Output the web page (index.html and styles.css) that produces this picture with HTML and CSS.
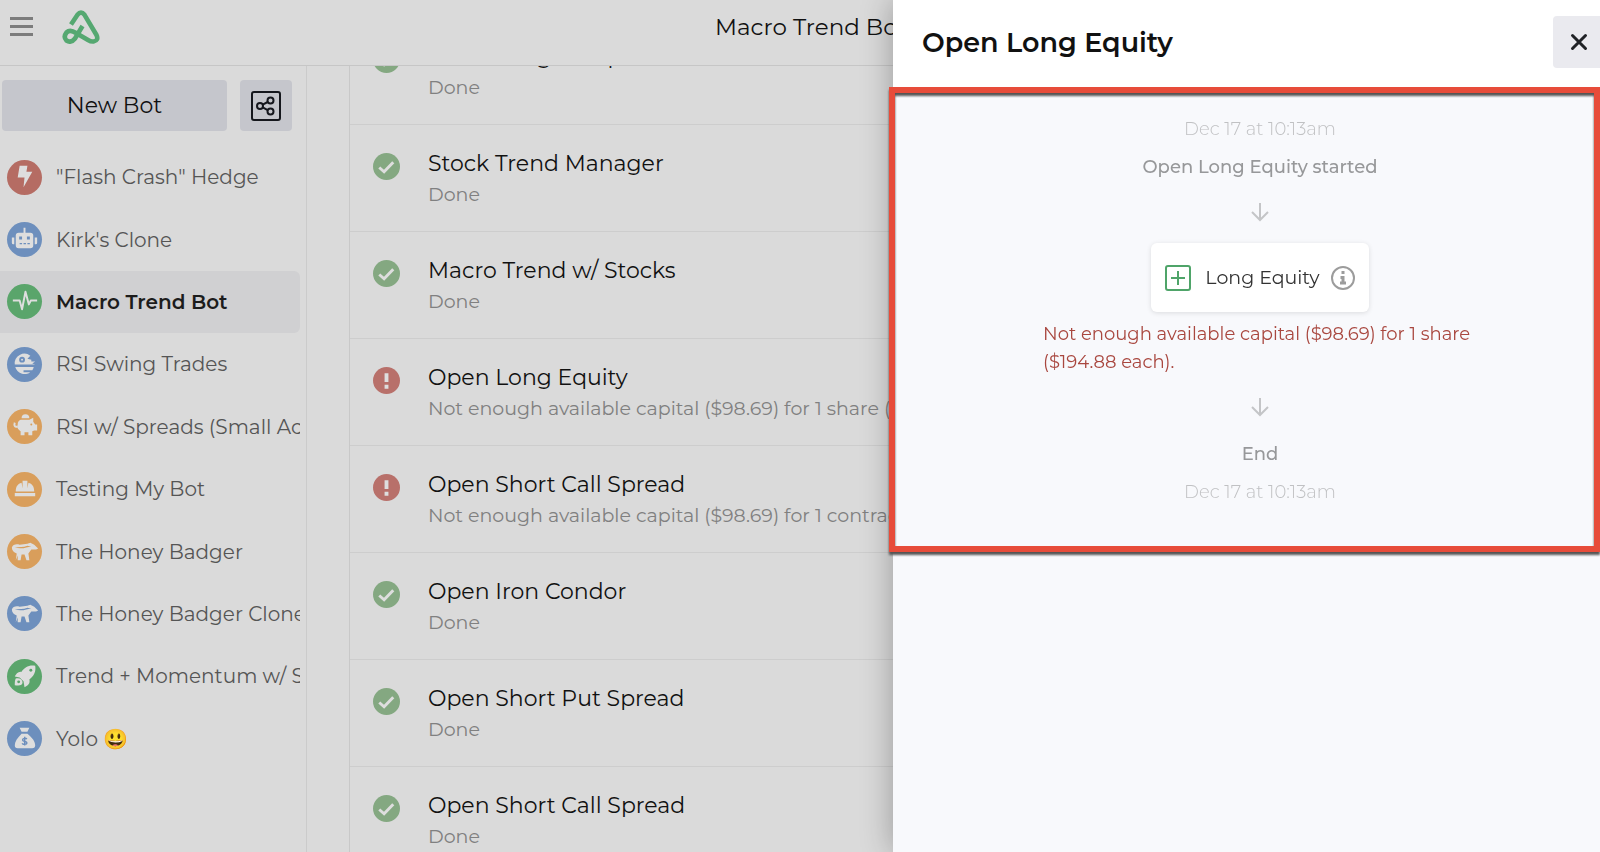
FILE: index.html
```html
<!DOCTYPE html>
<html lang="en">

<head>
    <meta charset="UTF-8">
    <title>Macro Trend Bot</title>
    <link rel="stylesheet" href="styles.css">
</head>

<body>
    <header class="topbar">
        <button class="menu" aria-label="Menu">
            <span></span>
            <span></span>
            <span></span>
        </button>
        <a href="#" class="logo" aria-label="Home">
            <svg width="38" height="34" viewBox="0 0 38 34" fill="none" stroke="#55a871" stroke-width="4.600" stroke-linejoin="round">
                <path d="M9 14.500 L15.500 4.800 Q19 .5 22.500 4.800 L34.500 25 Q37 30.500 31.500 31.500 Q29 31.800 26 30 L14 23 Q8 19 4.500 22.500 Q1 27 4.500 30.500 Q9 33.500 13 28.500 L20.500 16" />
            </svg>
        </a>
        <h1>Macro Trend Bot</h1>
    </header>

    <div class="page">
        <aside class="sidebar">
            <div class="actions">
                <button class="new-bot">New Bot</button>
                <button class="share" aria-label="Share">
                    <svg width="32" height="32" viewBox="0 0 32 32" fill="none" stroke="#15171d" stroke-width="2">
                        <rect x="2" y="2" width="28" height="28" rx="2" />
                        <circle cx="10" cy="16" r="3" />
                        <circle cx="20.500" cy="10.500" r="3" />
                        <circle cx="20.500" cy="21.500" r="3" />
                        <path d="M12.700 14.600l5-2.600M12.700 17.400l5 2.700" />
                    </svg>
                </button>
            </div>
            <nav class="bots">
                <a href="#">
                    <svg class="icon red" viewBox="0 0 36 36"><path d="M13 6h8l-1 6h6L17 28l1-10h-7z" /></svg>
                    <span>"Flash Crash" Hedge</span>
                </a>
                <a href="#">
                    <svg class="icon blue" viewBox="0 0 36 36">
                        <path d="M17 6h2v5h5a3 3 0 0 1 3 3v10a3 3 0 0 1-3 3H12a3 3 0 0 1-3-3V14a3 3 0 0 1 3-3h5zM5 16h2.500v7H6.500a1.500 1.500 0 0 1-1.500-1.500zM28.500 16H31v5.500a1.500 1.500 0 0 1-1.500 1.500h-1z" />
                        <path class="cut" d="M12.500 15h3v3h-3zM20.500 15h3v3h-3zM13 21.500h2.500v1.500H13zM17 21.500h2.500v1.500H17zM21 21.500h2.500v1.500H21z" />
                    </svg>
                    <span>Kirk's Clone</span>
                </a>
                <a href="#" class="current">
                    <svg class="icon green" viewBox="0 0 36 36"><path class="line" d="M6 17h7l2.500 9L19 8l3.500 13 2-4H31" /></svg>
                    <span>Macro Trend Bot</span>
                </a>
                <a href="#">
                    <svg class="icon blue" viewBox="0 0 36 36">
                        <path d="M8 18a10 10 0 0 1 16-9l-3 3 4 1v2h4l-3 2 3 1zM8.500 20.500h19A10 10 0 0 1 26 24h-9v2h7a10 10 0 0 1-15.500-5.500z" />
                        <circle class="cut" cx="15.500" cy="13" r="3" />
                        <circle cx="15.500" cy="13" r="1" />
                    </svg>
                    <span>RSI Swing Trades</span>
                </a>
                <a href="#">
                    <svg class="icon orange" viewBox="0 0 36 36">
                        <path d="M15 9.500a4 4 0 0 1 8 0zM14 11h9l4-2v4l2 3h2v6h-3l-2 1v4h-4v-3h-4v3h-4v-4c-3-2-4-4-3-7 0-3 1-4 3-5z" />
                        <path class="line" d="M11 18c-3 1-4-1-3-4" />
                        <circle class="cut" cx="25" cy="16" r="1" />
                    </svg>
                    <span>RSI w/ Spreads (Small Account)</span>
                </a>
                <a href="#">
                    <svg class="icon orange" viewBox="0 0 36 36">
                        <path d="M9 20c0-5 2-8 6-9l1 6V9h5v8l1-6c4 1 6 4 6 9zM8 21.500h21V25H8z" />
                    </svg>
                    <span>Testing My Bot</span>
                </a>
                <a href="#">
                    <svg class="icon orange" viewBox="0 0 36 36">
                        <path d="M5 14c1-3 4-4 8-3l8-1 3-1 4 2 4 4-2 1h-5l-3 4 1 7h-3l-2-6h-3l-1 6h-3v-5l-2 5H9l1-7c-3-1-5-3-5-6z" />
                        <path class="cut" d="M8 14c4-1 9 0 13-2l4 1c-5 0-8 3-17 1z" />
                    </svg>
                    <span>The Honey Badger</span>
                </a>
                <a href="#">
                    <svg class="icon blue" viewBox="0 0 36 36">
                        <path d="M5 14c1-3 4-4 8-3l8-1 3-1 4 2 4 4-2 1h-5l-3 4 1 7h-3l-2-6h-3l-1 6h-3v-5l-2 5H9l1-7c-3-1-5-3-5-6z" />
                        <path class="cut" d="M8 14c4-1 9 0 13-2l4 1c-5 0-8 3-17 1z" />
                    </svg>
                    <span>The Honey Badger Clone</span>
                </a>
                <a href="#">
                    <svg class="icon green" viewBox="0 0 36 36">
                        <path d="M29 7c-7-1-11 2-14 6-3 0-5 1-7 5l5 1 4 4 1 6c4-2 6-4 5-8 5-4 7-8 6-14zM9 20c4-1 7 1 7 4s-3 4-8 3c0-3 0-5 1-7z" />
                        <circle class="cut" cx="24.500" cy="11.500" r="1.500" />
                        <circle class="cut" cx="12" cy="23.500" r="1.500" />
                    </svg>
                    <span>Trend + Momentum w/ Stocks</span>
                </a>
                <a href="#">
                    <svg class="icon blue" viewBox="0 0 36 36">
                        <path d="M13 7h10l-2 4h-6zM15 13h6c5 4 8 8 8 12 0 2-1 3-3 3H11c-2 0-3-1-3-3 0-4 3-8 7-12z" />
                        <path class="cut-line" d="M20.500 18.500c-1-1-4.500-1-4.500 1s4.500 1 4.500 3-4 2-5 .5M18.200 16.200v9" />
                    </svg>
                    <span>Yolo 😃</span>
                </a>
            </nav>
        </aside>

        <main class="log">
            <ul>
                <li>
                    <svg class="status ok" viewBox="0 0 28 28"><circle cx="14" cy="14" r="14" /><path d="M6.500 15l5 4.500L21 9.500" /></svg>
                    <div>
                        <h2>Stock Long w/ Options</h2>
                        <p>Done</p>
                    </div>
                </li>
                <li>
                    <svg class="status ok" viewBox="0 0 28 28"><circle cx="14" cy="14" r="14" /><path d="M6.500 15l5 4.500L21 9.500" /></svg>
                    <div>
                        <h2>Stock Trend Manager</h2>
                        <p>Done</p>
                    </div>
                </li>
                <li>
                    <svg class="status ok" viewBox="0 0 28 28"><circle cx="14" cy="14" r="14" /><path d="M6.500 15l5 4.500L21 9.500" /></svg>
                    <div>
                        <h2>Macro Trend w/ Stocks</h2>
                        <p>Done</p>
                    </div>
                </li>
                <li>
                    <svg class="status fail" viewBox="0 0 28 28"><circle cx="14" cy="14" r="14" /><path d="M14 6.500v9M14 18.500v4" /></svg>
                    <div>
                        <h2>Open Long Equity</h2>
                        <p>Not enough available capital ($98.69) for 1 share ($194.88 each).</p>
                    </div>
                </li>
                <li>
                    <svg class="status fail" viewBox="0 0 28 28"><circle cx="14" cy="14" r="14" /><path d="M14 6.500v9M14 18.500v4" /></svg>
                    <div>
                        <h2>Open Short Call Spread</h2>
                        <p>Not enough available capital ($98.69) for 1 contract.</p>
                    </div>
                </li>
                <li>
                    <svg class="status ok" viewBox="0 0 28 28"><circle cx="14" cy="14" r="14" /><path d="M6.500 15l5 4.500L21 9.500" /></svg>
                    <div>
                        <h2>Open Iron Condor</h2>
                        <p>Done</p>
                    </div>
                </li>
                <li>
                    <svg class="status ok" viewBox="0 0 28 28"><circle cx="14" cy="14" r="14" /><path d="M6.500 15l5 4.500L21 9.500" /></svg>
                    <div>
                        <h2>Open Short Put Spread</h2>
                        <p>Done</p>
                    </div>
                </li>
                <li>
                    <svg class="status ok" viewBox="0 0 28 28"><circle cx="14" cy="14" r="14" /><path d="M6.500 15l5 4.500L21 9.500" /></svg>
                    <div>
                        <h2>Open Short Call Spread</h2>
                        <p>Done</p>
                    </div>
                </li>
            </ul>
        </main>
    </div>

    <!-- slide-in panel -->
    <section class="drawer">
        <div class="drawer-head">
            <h2>Open Long Equity</h2>
            <button class="close" aria-label="Close">
                <svg width="18" height="18" viewBox="0 0 18 18" fill="none" stroke="#202226" stroke-width="3" stroke-linecap="round"><path d="M2.500 2.500l13 13M15.500 2.500l-13 13" /></svg>
            </button>
        </div>
        <div class="flow">
            <time>Dec 17 at 10:13am</time>
            <p class="step">Open Long Equity started</p>
            <svg class="arrow" viewBox="0 0 20 20"><path d="M10 1v17M2 10l8 8 8-8" /></svg>
            <div class="card">
                <svg width="26" height="26" viewBox="0 0 26 26" fill="none" stroke="#4fa469" stroke-width="2"><rect x="1" y="1" width="24" height="24" rx="2" /><path d="M13 6v14M6 13h14" /></svg>
                <span>Long Equity</span>
                <button class="info" aria-label="Info">
                    <svg width="24" height="24" viewBox="0 0 24 24" fill="none" stroke="#9c9c9c" stroke-width="2"><circle cx="12" cy="12" r="11" /><path stroke-width="3" d="M12 5v3M9.500 11.500H12V17M9 17h6" /></svg>
                </button>
            </div>
            <p class="error">Not enough available capital ($98.69) for 1 share ($194.88 each).</p>
            <svg class="arrow" viewBox="0 0 20 20"><path d="M10 1v17M2 10l8 8 8-8" /></svg>
            <p class="step">End</p>
            <time>Dec 17 at 10:13am</time>
        </div>
    </section>
    <div class="highlight"></div>
</body>
</html>
```

FILE: styles.css
```css
* {
    padding: 0;
    margin: 0;
    box-sizing: border-box;
}

body {
    height: 100vh;
    overflow: hidden;
    display: flex;
    flex-direction: column;
    background: #dadada;
    color: #111;
    font-family: Montserrat, Inter, "Noto Color Emoji", sans-serif;
    font-size: 20px;
}

ul {
    list-style: none;
}

a {
    color: inherit;
    text-decoration: none;
}

button {
    border: 0;
    background: none;
    font: inherit;
    color: inherit;
    cursor: pointer;
}

svg {
    display: block;
    flex: none;
}

.topbar {
    display: flex;
    align-items: center;
    flex: none;
    height: 66px;
    padding: 0 10px 12px;
    border-bottom: 1px solid #c6c6c6;
    position: relative;
}

.menu span {
    display: block;
    width: 23px;
    height: 3px;
    margin: 5px 0;
    background: #7c7c7c;
}

.logo {
    margin-left: 29px;
}

.topbar h1 {
    position: absolute;
    left: 22px;
    right: 0;
    text-align: center;
    font-size: 23px;
    font-weight: 400;
}

.page {
    display: flex;
    flex: 1;
    min-height: 0;
}

.sidebar {
    flex: none;
    width: 307px;
    padding: 14px 6px 0 0;
    border-right: 1px solid #cbcbcb;
}

.actions {
    display: flex;
    gap: 13px;
    padding: 0 8px 0 2px;
}

.actions button {
    height: 51px;
    border-radius: 4px;
    background: #c5c6cc;
}

.new-bot {
    flex: 1;
    font-size: 22px;
}

.share {
    display: flex;
    align-items: center;
    justify-content: center;
    width: 52px;
}

.bots {
    display: grid;
    grid-auto-rows: 1fr;
    height: 624px;
    margin-top: 15px;
}

.bots a {
    display: flex;
    align-items: center;
    gap: 14px;
    padding-left: 7px;
    border-radius: 0 6px 6px 0;
    overflow: hidden;
    white-space: nowrap;
    color: #555;
}

.bots .current {
    background: #d0d0d2;
    color: #1c1c1c;
    font-weight: 600;
}

.icon {
    width: 35px;
    height: 35px;
    border-radius: 50%;
    fill: #dedede;
}

.icon .line {
    fill: none;
    stroke: #dedede;
    stroke-width: 2;
    stroke-linejoin: round;
}

.icon .cut {
    fill: #6d8fbd;
}

.icon .cut-line {
    fill: none;
    stroke: #6d8fbd;
    stroke-width: 1.5;
}

.red {
    background: #b56c63;
}

.blue {
    background: #6d8fbd;
}

.green {
    background: #5aa56b;
}

.orange {
    background: #d99e5b;
}

.orange .cut {
    fill: #d99e5b;
}

.green .cut {
    fill: #5aa56b;
}

.log {
    flex: 1;
    min-width: 0;
    overflow: hidden;
    padding-left: 42px;
}

.log ul {
    margin-top: -48px;
    border-left: 1px solid #c8c8c8;
}

.log li {
    display: flex;
    gap: 28px;
    height: 107px;
    padding: 24px 23px 0;
    border-bottom: 1px solid #cdcdcd;
    white-space: nowrap;
}

.log h2 {
    line-height: 30px;
    font-size: 22px;
    font-weight: 400;
}

.log p {
    line-height: 32px;
    font-size: 19px;
    color: #808080;
}

.status {
    width: 27px;
    height: 27px;
    margin-top: 4px;
    fill: none;
    stroke: #dedede;
    stroke-width: 3;
}

.ok circle {
    fill: #84a881;
    stroke: none;
}

.fail circle {
    fill: #b8706a;
    stroke: none;
}

.fail path {
    stroke-width: 4;
}

/* the panel runs a little past the right edge of the window */
.drawer {
    position: fixed;
    top: 0;
    bottom: 0;
    left: 893px;
    right: -27px;
    background: #f8f9fc;
    box-shadow: 0 0 30px rgba(0, 0, 0, .3);
}

.drawer-head {
    display: flex;
    align-items: center;
    justify-content: space-between;
    height: 87px;
    padding: 0 22px 3px 29px;
    background: #fff;
}

.drawer-head h2 {
    font-size: 27px;
    font-weight: 600;
}

.close {
    display: flex;
    align-items: center;
    justify-content: center;
    width: 52px;
    height: 52px;
    border-radius: 4px;
    background: #eaeaef;
}

.flow {
    display: flex;
    flex-direction: column;
    align-items: center;
    padding-top: 28px;
    line-height: 28px;
    font-size: 18px;
}

.flow time {
    color: #c0c1c3;
    font-weight: 300;
}

.step {
    margin: 10px 0;
    color: #97989a;
    font-weight: 500;
}

.arrow {
    width: 20px;
    height: 20px;
    margin: 11px 0 13px;
    fill: none;
    stroke: #c4c5c7;
    stroke-width: 2;
}

.card {
    display: flex;
    align-items: center;
    height: 69px;
    margin-top: 8px;
    padding: 0 14px;
    border-radius: 6px;
    background: #fff;
    box-shadow: 0 1px 5px rgba(0, 0, 0, .12);
    font-size: 19px;
    color: #333;
}

.card span {
    margin: 0 11px 0 14px;
}

.error {
    width: 434px;
    margin: 8px 0 10px;
    color: #a9473f;
}

.highlight {
    position: fixed;
    top: 87px;
    left: 889px;
    right: 0;
    height: 465px;
    border: 6px solid #e74c3a;
    filter: drop-shadow(0 3px 1px #555);
    pointer-events: none;
}
```
